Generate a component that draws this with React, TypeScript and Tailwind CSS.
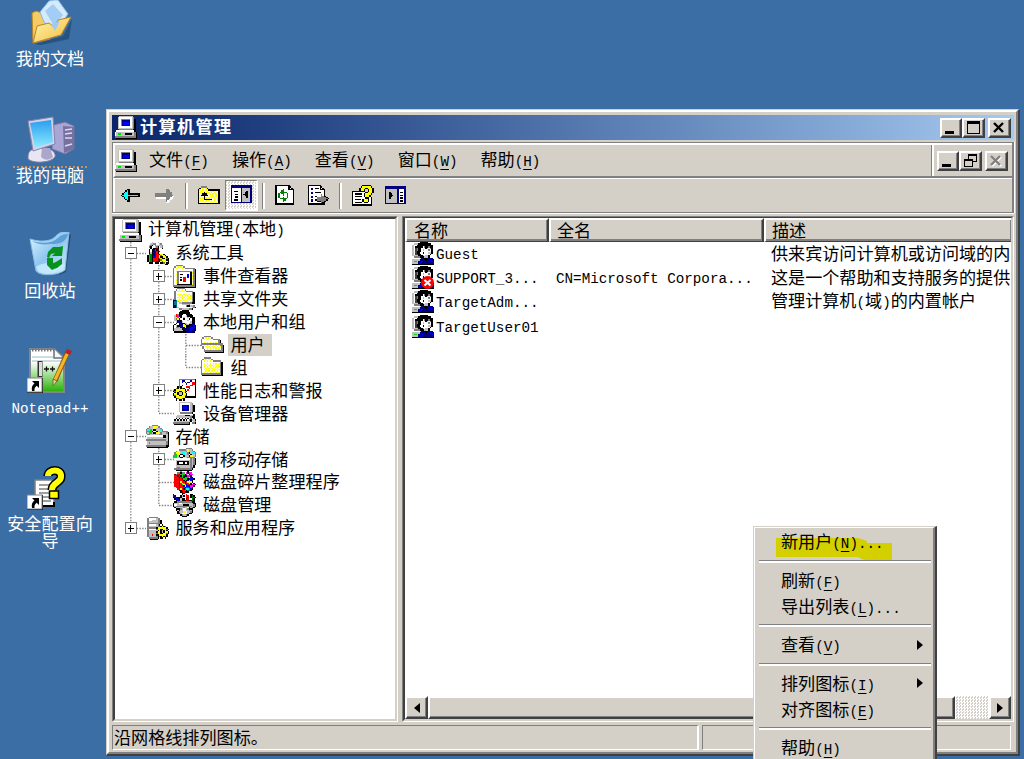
import type { ReactNode } from "react";

/* ---------- text ---------- */

/** Half-width runs take half of a full-width cell; "&X" underlines X. */
function T({ children, className = "whitespace-pre leading-[22px]" }: { children: string; className?: string }) {
  const parts = children.split(/([\x20-\x7e]+)/).filter(Boolean);
  return (
    <span className={"pb-[2px] text-[17.1px] " + className}>
      {parts.map((p, i) => {
        if (!/^[\x20-\x7e]/.test(p)) return <span key={i}>{p}</span>;
        const m = p.match(/^(.*)&(.)(.*)$/);
        return (
          <span key={i} className="font-['Liberation_Mono',monospace] text-[14.25px]">
            {m ? (
              <>
                {m[1]}
                <span className="underline decoration-1 underline-offset-[3px]">{m[2]}</span>
                {m[3]}
              </>
            ) : (
              p
            )}
          </span>
        );
      })}
    </span>
  );
}

/* ---------- pixel icons ---------- */

const PALETTE: Record<string, string> = {
  K: "#000000", W: "#ffffff", G: "#808080", L: "#c0c0c0", Y: "#ffff00", B: "#0000ff",
  N: "#000080", R: "#ff0000", E: "#00e000", C: "#00ffff", T: "#008080", O: "#808000",
  M: "#ff00ff", D: "#404040", F: "#008000", P: "#ffffe0", X: "#800000",
};

const ICONS = {
  computer: [
    "...LLLLLLLLLL...", "..LWWWWWWWWWLG..", "..LWGGGGGGGWLGK.", "..LWGNNNNNNWLGK.",
    "..LWGNBBBBNWLGK.", "..LWGNBBBBNWLGK.", "..LWGNNNNNNWLGK.", "..LWWWWWWWWWLGK.",
    "..LLLLLLLLLLLGK.", "...GGGGGGGGGGKK.", ".WWWWWWWWWWWWWK.", "WLLLLLLLLLLLLLGK",
    "WLEELLLKKKKKLLGK", "WLLLLLLLLLLLLLGK", "GGGGGGGGGGGGGGGK", ".KKKKKKKKKKKKKKK",
  ],
  tools: [
    "....LWWWL.......", "..WLLGGWWLG.....", ".WLGK.GLLLLG....", "..GK..LGK.LG....",
    "...KWKKXK..K....", "..KWKNRKX.......", "..KWKNBRKX......", "..KLKNBRK.......",
    "..FFKNBRRKYYK...", ".KEFKNBRRYOYYK..", ".KEFKBBRRYKKYYK.", ".KEFKRRRXOYKKYOK",
    ".KEFKRRRXKOYYYKK", ".KEFKRRXKKYOYYYK", "..KKK.KKK.KKOYKK", ".............KK.",
  ],
  events: [
    "..GGGGG.........", ".GPYPYPG........", "GPYPYPYPGGGGGGG.", "GWWWWWWWWWWWWWGK",
    "GWYGGGGGGGGGGPGK", "GWPGWWWWWWWWKYGK", "GWYGWKKWWWBWKPGK", "GWPGWWWWWWBWKYGK",
    "GWYGWKWRRWBWKPGK", "GWPGWWWRRWWWKYGK", "GWYGWKWRRWWWKPGK", "GWPGWWWRRWWWKYGK",
    "GWYGWWWWWWWWKPGK", "GWPKKKKKKKKKKYGK", "GGGGGGGGGGGGGGGK", ".KKKKKKKKKKKKKKK",
  ],
  share: [
    "...GGGGG........", "..GPYPYPG.......", ".GPYPYPYPGGGGG..", ".GWWWWWWWWWWWGK.",
    ".GWYPYPYPYPYPGK.", ".GWPYPYPYPYPYGK.", ".GWYPYPYPYPYPGK.", ".GWPYPYPYPYPYGK.",
    "NNTYPYPYPYPYPGK.", "NTTLYPYPYPYPYGK.", "NTTWLLGGGGGGGKK.", "NTTWWWLLLLLG....",
    "BNTWWWWWWGKKLLG.", "NNTLWWWWWWWWWLGK", "....GGLLLLLGGK..", "......KKKKK.....",
  ],
  users: [
    ".....KKKKKK.....", "..WWKKKKKKKK....", ".WRGKKKWWKKKK...", ".LRMKKWWWLKKKK..",
    "WLYOWKWLWWLWKKK.", "WLOYNWWKWWWKWKK.", ".LLNNKWWWWLWWKK.", "..LNNNLWWWWWLKK.",
    "..KWNNNKLLWLLKK.", ".KWWKNNYKLLKKNN.", "KWLKKNNYYKKNNNBK", "KWEELKNNYNNNBBBK",
    "KLLLLLKNNNNBBBNK", "KLLLLLLKNNNNBNNK", ".KKKKKKKKNNNNNK.", "................",
  ],
  user: [
    "......KKKKKK....", "..LLLKKKKKKKKK..", ".LWWKKKKKKKKKKK.", ".LWKKKKKWGKKGKK.",
    ".LWDGKKWWWKLWGK.", ".LWDGKKWLWWWGWK.", ".LWDKKKWWWWWWWK.", ".LWDKKWWKWWWLLK.",
    ".LWDDKKWWWWWWK..", ".LLLLKKKLWLLK...", "..GGGGKKKLLLK...", "WWWWWWLNKKKNNNN.",
    "WLLLLLNNNNKNNBNN", "WLEELNNBNNNNNNBN", "WLLLLNBNNNNNNNNN", ".KKKKKKKKKKKKKKK",
  ],
  folderOpen: [
    "................", "................", "..GGGGG.........", ".GPYPYPG........",
    "GPYPYPYPGGGGG...", "GWWWWWWWWWWWGK..", "GWYPYPYPYPYPGK..", "GGGGGGGGGGGGGGG.",
    "GWYPYPYPYPYPYGGK", ".GWYPYPYPYPYPYGK", ".GWPYPYPYPYPYPGK", "..GWYPYPYPYPYPGK",
    "..GGGGGGGGGGGGGK", "...KKKKKKKKKKKKK", "................", "................",
  ],
  folder: [
    "................", "..GGGGG.........", ".GPYPYPG........", "GPYPYPYPGGGGGG..",
    "GWWWWWWWWWWWWGK.", "GWYPYPYPYPYPYGK.", "GWPYPYPYPYPYPGK.", "GWYPYPYPYPYPYGK.",
    "GWPYPYPYPYPYPGK.", "GWYPYPYPYPYPYGK.", "GWPYPYPYPYPYPGK.", "GWYPYPYPYPYPYGK.",
    "GGGGGGGGGGGGGGK.", ".KKKKKKKKKKKKKK.", "................", "................",
  ],
  perf: [
    "....GGGGGGGGGGGK", "....GWNNWWWWNWWK", "....GWBWNWNNWRRK", "....GWWWWNWWWRRK",
    "....GWNWWWWWRRWK", "...KGKWWWRRRWWWK", "..OKYKOKWWWRWWWK", ".KYYYYYYKWRWWWWK",
    "KOYYKKYYOKWWWWWK", ".KYKLLKYKWWWWWWK", "KYYKLLKYYKWWWWWK", "KOYYKKYYOKWWWWWK",
    ".KYYYYYYKKKKKKKK", "..KOYYOK........", "..K.KK.K........", "................",
  ],
  device: [
    "....LLLLLLLLL...", "....LWWWWWWWLG..", "....LWNNNNNWLGK.", "....LWNBBBNWLGK.",
    "....LWNBBBNWLGK.", "....LWNNNNNWLGK.", "....LWWWWWWWLGK.", ".....GGGGGGGGK..",
    "...WWWWWWWWWWWK.", "...LLLLLKKKKLLK.", "..LLLLLLLLLLGKK.", ".WKWKWKWKWKWG.K.",
    "WKWKWKWKWKWGKLLK", "WLLLLLLLLLLLKWLG", "GGGGGGGGGGGK.GGK", ".KKKKKKKKKKK....",
  ],
  storage: [
    "....GGGG........", "..GLLYYYGG......", ".GCLLYYLLCG.....", "GCCELKKLLLCG....",
    "GEEEKWWKYLLGGGG.", "GLEELKKYYYGLLLGK", ".GGLLLLLLGGLLLLK", "WWWWWWWWWWWWKKLK",
    "WLLLLLLLLLLLKKLK", "WLLLLLLLLLLLLLLK", "GGGGGGGGGGGGGGLK", "WLLLLLLLLLLLLLGK",
    "WLELLLLLLLLLLLGK", "WLLLLLLLLLLLLLGK", "GGGGGGGGGGGGGGKK", ".KKKKKKKKKKKKKK.",
  ],
  removable: [
    ".........GGGG...", "....GGGGGLYLLG..", "..GYYLCLLGYLLCG.", ".GYYYLCCLLGKLCCG",
    ".GEYYKKCLLGWKLLG", "GEELKWWKLLLKYYLG", "GEELLKKYYLGGGGG.", ".WWWWWWWWWWWGLGK",
    ".WLLLLLLLLLLGLGK", ".WLKKKKKKKKLGLGK", ".WLKWWWKWWKLGLGK", ".WLKKKKKKKKLGLGK",
    ".WLLLLLLLLLLGLK.", ".WLEELLLLLLLGGK.", ".GGGGGGGGGGGGK..", "..KKKKKKKKKKK...",
  ],
  defrag: [
    ".....G....K.....", "...GGKGG.MKMM...", ".XGRXGEEKM.KMM..", ".RRXRKENKKMMK...",
    ".RRRXRGKEEM.BK..", ".RRRXRXEEEKBBBK.", ".RRRXRRKEKBYBK..", ".RRRXYRRKRYYYK..",
    ".RRRXRYEKRRYK.K.", ".RRRXREYEBRRKMMK", ".RRRXRRBYBBKMMK.", "..RRXRRRKTTBMK..",
    "...RRYRKTCCTBK..", "....XKRREKTTK...", ".....KXRKKK.....", "......KK........",
  ],
  diskmgmt: [
    "N.....K..R..KK..", "BN...KLK.RR.KFK.", "KBNKKKL..RX.KFFK", ".KBNKLKK.XR..FK.",
    "..KBKLKKKRXKKFK.", ".KKGGGGGGGGGGKK.", "KLLLWWLLLLLLLLKK", "KWWLLLLKKKKLLLGK",
    "KLGGGGGGGGGGGLGK", ".KLLLLLGLLWKLGK.", "..KKKGLWWLGKKK..", "..KLKLLWWLLGLK..",
    "...KGLLYYWLLGK..", "...KKLWWWWLKK...", ".....KGLLGK.....", "......KKKK......",
  ],
  services: [
    "..GGGGGG........", ".GWWWWWLGG......", ".GWWLLLLGGK.....", ".GLLLLLLGGK.....",
    ".GGGGGGGGGK.....", ".GWWWWWLGK.K....", ".GLLLLLLGOKYKO..", ".GGGGGGKYYYYYYK.",
    ".GWWWWWOYYKKYYOK", ".GLLLLLLKYKLKYK.", ".GLLLLLKYYKLKYYK", ".GLLLLLOYYKKYYOK",
    ".GLLRLLKKYYYYYK.", ".GLLLLLGKOKYKOK.", "..GGGGGGK.KK.K..", "...KKKKK........",
  ],
  up: [
    "................", "..GGGG..........", ".KPYPYK.........", "KYPYPYPKKKKKKKK.",
    "KPYPYPYPYPYPYPK.", "KYPYKYPYPYPYPYK.", "KPYKKKYPYPYPYPK.", "KYKKKKKPYPYPYPK.",
    "KPYPKPYPYPYPYPK.", "KYPYKYPYPYPYPYK.", "KPYPKKKKKKPYPYK.", "KYPYPYPYPYPYPYK.",
    "KPYPYPYPYPYPYPK.", "KKKKKKKKKKKKKKK.", "................", "................",
  ],
  pane: [
    "................", "NNNNNNNNNNNNNNN.", "NNNNNNNNNNNNNNN.", "NWWWWWWNLLLLLLN.",
    "NWWWWWWNLLLLLLN.", "NWKKKWWNLLLKLLN.", "NWWWWWWNLLKKLLN.", "NWWKKWWNLKKKLLN.",
    "NWWWWWWNLLKKLLN.", "NWWKKWWNLLLKLLN.", "NWWWWWWNLLLLLLN.", "NWKKKWWNLLLLLLN.",
    "NWWWWWWNLLLLLLN.", "NNNNNNNNNNNNNNN.", "................", "................",
  ],
  paneRight: [
    "................", "NNNNNNNNNNNNNNN.", "NNNNNNNNNNNNNNN.", "NLLLLLLLLNWWWWN.",
    "NLLLLLLLLNWWWWN.", "NLLKLLLLLNWKKWN.", "NLLKKLLLLNWWWWN.", "NLLKKKLLLNWKKWN.",
    "NLLKKLLLLNWWWWN.", "NLLKLLLLLNWKKWN.", "NLLLLLLLLNWWWWN.", "NLLLLLLLLNWKKWN.",
    "NLLLLLLLLNWWWWN.", "NNNNNNNNNNNNNNN.", "................", "................",
  ],
  refresh: [
    ".KKKKKKKKKK.....", ".KWWWWWWWWKK....", ".KWWWWWWWWKWK...", ".KWWWWFWWWKKKK..",
    ".KWWWFFWWWWWWK..", ".KWWFFFFFWWWWK..", ".KWFWFFWWFWWWK..", ".KWFWWFWWFWWWK..",
    ".KWFWWWWWFWWWK..", ".KWFWWFWWFWWWK..", ".KWWFFFFFWWWWK..", ".KWWWWFFWWWWWK..",
    ".KWWWWFWWWWWWK..", ".KWWWWWWWWWWWK..", ".KKKKKKKKKKKKK..", "................",
  ],
  exportList: [
    "KKKKKKKKKK......", "KWWWWWWWWKK.....", "KWNNWKKKWKWK....", "KWNNWWWWWKKKK...",
    "KWWWWWWWWWWWK...", "KWNNWKKKKKWWK...", "KWNNWWWWWWWWK...", "KWWWWWWWWWGWK...",
    "KWNNWKKWWWGGKK..", "KWNNWWWGGGGGGGK.", "KWWWWWWGGGGGGGGK", "KWNNWKKGGGGGGGK.",
    "KWNNWWWKKKGGKK..", "KWWWWWWWWWGKK...", "KKKKKKKKKKKKK...", "................",
  ],
  help: [
    ".......KKKKKK...", "......KYYYYYYK..", ".....KYYYKKYYYK.", ".....KYYK..KYYK.",
    "KKKKKKKKK..KYYK.", "KWWWWWWWWKKYYYK.", "KWKKKKKWKYYYYK..", "KWWWWWWWKYYYK...",
    "KWKKKKKWKYYYK...", "KWWWWWWWWKKKWK..", "KWKKKKWKYYYKWK..", "KWWWWWWKYYYKWK..",
    "KWKKKKKWKKKWWK..", "KWWWWWWWWWWWWK..", "KKKKKKKKKKKKKK..", "................",
  ],
  back: [
    "................", "................", "....KK..........", "...KCK..........",
    "..KCCK..........", ".KCCCKKKKKKKK...", "KCCCCCCCCCCCK...", ".KCCCKKKKKKKK...",
    "..KCCK..........", "...KCK..........", "....KK..........", "................",
  ],
  forward: [
    "................", "................", "........GG......", "........GGG.....",
    "........GGGG....", "GGGGGGGGGGGG....", "GGGGGGGGGGGGG...", "GGGGGGGGGGGGWW..",
    ".WWWWWWWGGGWW...", "........GGWW....", "........GWW.....", "........WW......",
  ],
} as const;

type IconName = keyof typeof ICONS;

function Pix({ name, className = "size-[23px]" }: { name: IconName; className?: string }) {
  const rows = ICONS[name];
  const rects: ReactNode[] = [];
  rows.forEach((row, y) => {
    let x = 0;
    while (x < row.length) {
      const c = row[x];
      let e = x + 1;
      while (e < row.length && row[e] === c) e++;
      if (c !== ".") rects.push(<rect key={`${x}-${y}`} x={x} y={y} width={e - x} height={1} fill={PALETTE[c]} />);
      x = e;
    }
  });
  return (
    <svg viewBox={`0 0 16 ${rows.length}`} preserveAspectRatio="none" shapeRendering="crispEdges" className={"block shrink-0 " + className}>
      {rects}
    </svg>
  );
}

/* ---------- desktop ---------- */

function Shortcut() {
  return (
    <g>
      <rect x="0" y="30" width="16" height="15" fill="#000" />
      <rect x="0" y="30" width="15" height="14" fill="#fff" stroke="#808080" strokeWidth="1" />
      <path d="M5 33h7v7l-2.300-2.300c-2 1.500-2.400 3-2.200 5.300H5c-.8-3.500.3-6 2.500-7.500z" fill="#000" />
    </g>
  );
}

function DesktopIcon({ children, label, className, focus }: { children: ReactNode; label: string; className: string; focus?: boolean }) {
  return (
    <div className={"absolute left-[2px] flex w-[96px] flex-col items-center text-white " + className}>
      <div className="h-[46px] w-[46px]">{children}</div>
      <div className={"mt-[3px] w-[74px] border-t-2 " + (focus ? "border-dotted border-[#c89058]" : "border-transparent")} />
      <T className="-mt-[2px] w-[90px] text-center leading-[17px]">{label}</T>
    </div>
  );
}

function Desktop() {
  return (
    <>
      <DesktopIcon className="top-0" label="我的文档">
        <svg viewBox="0 0 46 46" className="block size-full">
          <defs>
            <linearGradient id="fold" x1="0" y1="0" x2="1" y2="1">
              <stop offset="0" stopColor="#fff6b0" />
              <stop offset="1" stopColor="#f2bb3c" />
            </linearGradient>
          </defs>
          <path d="M8 44l28-8 9-17-3 20-28 6z" fill="#1d3f66" opacity=".6" />
          <path d="M5 13l4-2 6 2 2 3 6-1v24L6 43z" fill="#f4cc62" stroke="#b88424" />
          <path d="M13 12L22 1l5-1h4l10 14-12 17-12-9z" fill="#d5ebfc" stroke="#83b9ea" />
          <path d="M18 11l8-7 10 11-9 11z" fill="#a4cdf5" />
          <path d="M6 43l4-17 12-3 5 4 4-7 13-3-10 18z" fill="url(#fold)" stroke="#b88424" />
          <path d="M24 24l9-3-5 10z" fill="#9ccbf4" />
        </svg>
      </DesktopIcon>
      <DesktopIcon className="top-[117px]" label="我的电脑" focus>
        <svg viewBox="0 0 46 46" className="block size-full overflow-visible">
          <defs>
            <linearGradient id="scr" x1="0" y1="0" x2="0" y2="1">
              <stop offset="0" stopColor="#2c9cf0" />
              <stop offset="1" stopColor="#8cecff" />
            </linearGradient>
          </defs>
          <path d="M26 8l12-3 9 4v23l-9 5-13-5z" fill="#a9a5d4" stroke="#77739f" />
          <path d="M36 9l11 1v22l-10 4z" fill="#77719f" />
          <path d="M38 13l7-1M38 17l7-1M38 21l7 0M38 29l7-2" stroke="#dcd8f4" strokeWidth="1.500" />
          <path d="M1 39c0-6 6-8 12-8h7c6 2 9 5 8 9-4 6-22 7-27 2z" fill="#e8e6f4" stroke="#7a769c" />
          <path d="M15 31h8l3 9c-4 4-9 3-12 0z" fill="#aaa7cb" />
          <path d="M1 4l25-4 2 27-22 7z" fill="#d4d2e8" stroke="#8582ab" />
          <path d="M3 6l21-3 2 22-18 6z" fill="url(#scr)" />
        </svg>
      </DesktopIcon>
      <DesktopIcon className="top-[232px]" label="回收站">
        <svg viewBox="0 0 46 46" className="block size-full">
          <defs>
            <linearGradient id="bin" x1="0" y1="0" x2="1" y2="1">
              <stop offset="0" stopColor="#e4f6ff" />
              <stop offset=".5" stopColor="#8cc6f0" />
              <stop offset="1" stopColor="#d6f0ff" />
            </linearGradient>
          </defs>
          <path d="M40 4l4-2-5 38-7 3z" fill="#1f4064" opacity=".7" />
          <path d="M3 7c9 3 20 3 25-2 4-5 9-6 14-5l-4 38c-6 5-24 7-29 1z" fill="url(#bin)" stroke="#8abce2" />
          <path d="M5 9c11 3 21 2 26-3 3-3 6-4 10-4-2 9-9 10-18 10-7 1-13 0-18-3z" fill="#5d9fd7" />
          <path d="M9 35c5-5 21-5 29-2-5 9-22 11-27 6z" fill="#cbeeff" opacity=".8" />
          <g fill="#079220">
            <path d="M21 20l5-5 6 0 4-1-1 10-10 0 3-3-4 1-2 4-2-1z" />
            <path d="M20 26l6 0 0 5 3-1 6-4 0 6-5 4-3 1-2 1-5-5z" />
          </g>
        </svg>
      </DesktopIcon>
      <DesktopIcon className="top-[348px]" label="Notepad++">
        <svg viewBox="0 0 46 46" className="block size-full">
          <defs>
            <linearGradient id="npp" x1="0" y1="0" x2="0" y2="1">
              <stop offset=".3" stopColor="#ffffff" />
              <stop offset="1" stopColor="#25b000" />
            </linearGradient>
          </defs>
          <path d="M3 1h24l10 9v34H3z" fill="url(#npp)" stroke="#7f8790" strokeWidth="2" />
          <path d="M5 2h22" stroke="#777" strokeWidth="3" strokeDasharray="1.500 1.500" />
          <path d="M5 9h21M5 13h30" stroke="#bed2da" strokeWidth="1.500" />
          <path d="M27 1v9h9" fill="#f7f7f7" stroke="#68717a" strokeWidth="1.500" />
          <path d="M13 13v16" stroke="#333" strokeWidth="5" />
          <path d="M13.500 14v14" stroke="#ddd" strokeWidth="3" />
          <path d="M17 21h5M19.500 18.500v5M23 21h5M25.500 18.500v5" stroke="#111" strokeWidth="1.300" />
          <path d="M41 3L28 33" stroke="#8c5b14" strokeWidth="5" />
          <path d="M41 4L28 32" stroke="#f5b627" strokeWidth="3" />
          <path d="M26 31l4 2-4 5z" fill="#e9cd9a" stroke="#6a501f" strokeWidth=".7" />
          <path d="M40 1l5 2-2 4-5-2z" fill="#b82030" />
          <Shortcut />
        </svg>
      </DesktopIcon>
      <DesktopIcon className="top-[465px]" label="安全配置向导">
        <svg viewBox="0 0 46 46" className="block size-full">
          <path d="M8 15h19v26H8z" fill="#fff" stroke="#808080" strokeWidth="1.500" />
          <path d="M12 20h10M12 24h12M12 28h12M12 32h12M16 36h8" stroke="#808080" strokeWidth="1.500" />
          <path d="M27 37v4H9" stroke="#000" strokeWidth="2" fill="none" />
          <path d="M21 11c0-7 14-8 13 1 0 6-9 5-9 13" fill="none" stroke="#000" strokeWidth="9" />
          <path d="M21 11c0-7 14-8 13 1 0 6-9 5-9 13" fill="none" stroke="#ff0" strokeWidth="6" />
          <rect x="22.500" y="26" width="9" height="7.500" fill="#ff0" stroke="#000" strokeWidth="1.500" />
          <Shortcut />
        </svg>
      </DesktopIcon>
    </>
  );
}

/* ---------- window chrome ---------- */

const RAISED =
  "bg-[#d4d0c8] border-t-2 border-l-2 border-t-white border-l-white border-r-2 border-b-2 border-r-[#404040] border-b-[#404040] shadow-[inset_-1px_-1px_0_#808080]";

function CapButton({ kind, disabled, className = "" }: { kind: "min" | "max" | "restore" | "close"; disabled?: boolean; className?: string }) {
  return (
    <div className={"h-[20px] shrink-0 " + RAISED + " " + className}>
      <svg viewBox="0 0 18 16" shapeRendering="crispEdges" className="block h-[16px] w-[18px]">
        {kind === "min" && <rect x="3" y="11" width="9" height="3" fill="#000" />}
        {kind === "max" && <path d="M3 1h13v13H3zM4 4v9h11V4z" fill="#000" fillRule="evenodd" />}
        {kind === "restore" && (
          <>
            <path d="M7 1h9v8H7zM8 3v5h7V3z" fill="#000" fillRule="evenodd" />
            <path d="M3 6h9v8H3zM4 8v5h7V8z" fill="#000" fillRule="evenodd" />
            <rect x="4" y="8" width="7" height="5" fill="#d4d0c8" />
          </>
        )}
        {kind === "close" && (
          <g shapeRendering="auto" fill="none" strokeWidth="2.400">
            {disabled && <path d="M5 4l9 9M14 4l-9 9" stroke="#fff" />}
            <path d="M4 3l9 9M13 3l-9 9" stroke={disabled ? "#808080" : "#000"} />
          </g>
        )}
      </svg>
    </div>
  );
}

function ToolSep({ className }: { className: string }) {
  return <div className={"h-[26px] w-[3px] shrink-0 border-l border-l-[#808080] bg-white " + className} />;
}

const CHECKER = "bg-[conic-gradient(#fff_25%,#d4d0c8_0_50%,#fff_0_75%,#d4d0c8_0)] bg-[length:3px_3px]";

/* ---------- tree ---------- */

type Guide = "line" | "tee" | "end" | "plus" | "minus" | "plusEnd";
type Node = { guides: Guide[]; icon: IconName; label: string; selected?: boolean };

const TREE: Node[] = [
  { guides: [], icon: "computer", label: "计算机管理(本地)" },
  { guides: ["minus"], icon: "tools", label: "系统工具" },
  { guides: ["line", "plus"], icon: "events", label: "事件查看器" },
  { guides: ["line", "plus"], icon: "share", label: "共享文件夹" },
  { guides: ["line", "minus"], icon: "users", label: "本地用户和组" },
  { guides: ["line", "line", "tee"], icon: "folderOpen", label: "用户", selected: true },
  { guides: ["line", "line", "end"], icon: "folder", label: "组" },
  { guides: ["line", "plus"], icon: "perf", label: "性能日志和警报" },
  { guides: ["line", "end"], icon: "device", label: "设备管理器" },
  { guides: ["minus"], icon: "storage", label: "存储" },
  { guides: ["line", "plus"], icon: "removable", label: "可移动存储" },
  { guides: ["line", "tee"], icon: "defrag", label: "磁盘碎片整理程序" },
  { guides: ["line", "end"], icon: "diskmgmt", label: "磁盘管理" },
  { guides: ["plusEnd"], icon: "services", label: "服务和应用程序" },
];

function GuideCell({ kind }: { kind: Guide }) {
  const boxed = kind === "plus" || kind === "minus" || kind === "plusEnd";
  const last = kind === "end" || kind === "plusEnd";
  return (
    <svg viewBox="0 0 27.5 22.92" className="block h-[22.92px] w-[27.5px] shrink-0 overflow-visible">
      <path d={last ? "M13.800 0V11.500" : "M13.800 0V22.920"} stroke="#808080" strokeWidth="1.300" strokeDasharray="1.400 1.465" />
      {kind !== "line" && <path d="M14 11.500H29" stroke="#808080" strokeWidth="1.300" strokeDasharray="1.400 1.400" />}
      {boxed && (
        <g shapeRendering="crispEdges">
          <rect x="8" y="5.500" width="12" height="12" fill="#808080" />
          <rect x="9" y="6.500" width="10" height="10" fill="#fff" />
          <rect x="10.500" y="11" width="7" height="1.400" fill="#000" />
          {kind !== "minus" && <rect x="13" y="8" width="1.500" height="7" fill="#000" />}
        </g>
      )}
    </svg>
  );
}

function Tree() {
  return (
    <div className="flex flex-col">
      {TREE.map((n) => (
        <div key={n.label} className="flex h-[22.92px] items-center pl-[2px]">
          {n.guides.map((g, i) => (
            <GuideCell key={i} kind={g} />
          ))}
          <Pix name={n.icon} className={"h-[23px] w-[23px] " + (n.guides.length ? "mr-[4px] ml-[1px]" : "mr-[3px] ml-[2px]")} />
          <div className={"flex h-full items-center pl-[3px] " + (n.selected ? "w-[44px] bg-[#d4d0c8]" : "")}>
            <T>{n.label}</T>
          </div>
        </div>
      ))}
    </div>
  );
}

/* ---------- list ---------- */

const USERS = [
  { name: "Guest", full: "", desc: "供来宾访问计算机或访问域的内" },
  { name: "SUPPORT_3...", full: "CN=Microsoft Corpora...", desc: "这是一个帮助和支持服务的提供", off: true },
  { name: "TargetAdm...", full: "", desc: "管理计算机(域)的内置帐户" },
  { name: "TargetUser01", full: "", desc: "" },
];

function Header({ children, className }: { children: string; className: string }) {
  return (
    <div className={"flex h-[24px] shrink-0 items-center border-t-2 border-b border-l-2 border-white border-b-[#404040] bg-[#d4d0c8] shadow-[inset_-1px_-1px_0_#808080,inset_0_-2px_0_#808080] " + className}>
      <T className="pb-[3px] whitespace-pre leading-[21px]">{children}</T>
    </div>
  );
}

function List() {
  return (
    <div className="flex min-h-0 flex-1 flex-col overflow-hidden">
      <div className="flex">
        <Header className="w-[144px] border-r-2 border-r-[#404040] pl-[7px]">名称</Header>
        <Header className="w-[215px] border-r-2 border-r-[#404040] pl-[6px]">全名</Header>
        <Header className="w-[247px] pl-[6px]">描述</Header>
      </div>
      {USERS.map((u) => (
        <div key={u.name} className="flex h-[24.3px] shrink-0 items-center">
          <div className="flex w-[151px] shrink-0 items-center pl-[6px]">
            <div className="relative mb-[2px]">
              <Pix name="user" />
              {u.off && (
                <svg viewBox="0 0 13 13" className="absolute right-0 bottom-0 size-[13px]">
                  <circle cx="6.500" cy="6.500" r="6.500" fill="#f00" />
                  <path d="M3.500 4l6 5.500M9.500 4l-6 5.500" stroke="#fff" strokeWidth="2" />
                </svg>
              )}
            </div>
            <T className="ml-[2px] whitespace-pre leading-[22px]">{u.name}</T>
          </div>
          <T className="w-[215px] shrink-0 whitespace-pre leading-[22px]">{u.full}</T>
          <T>{u.desc}</T>
        </div>
      ))}
    </div>
  );
}

function ScrollArrow({ left, className }: { left?: boolean; className: string }) {
  return (
    <div className={"flex h-[23px] shrink-0 items-center justify-center " + RAISED + " " + className}>
      <svg viewBox="0 0 6 10" className="block h-[10px] w-[6px]">
        <path d={left ? "M6 0v10L0 5z" : "M0 0v10l6-5z"} fill="#000" />
      </svg>
    </div>
  );
}

/* ---------- context menu ---------- */

function MenuItem({ label, sub, className = "h-[26px]" }: { label: string; sub?: boolean; className?: string }) {
  return (
    <div className={"relative flex shrink-0 items-center pr-[10px] pl-[26px] " + className}>
      <T>{label}</T>
      {sub && (
        <svg viewBox="0 0 6 10" className="mb-[4px] ml-auto block h-[10px] w-[6px]">
          <path d="M0 0v10l6-5z" fill="#000" />
        </svg>
      )}
    </div>
  );
}

function MenuSep() {
  return <div className="mr-[2px] ml-[4px] h-[3px] shrink-0 border-t border-[#808080] bg-white" />;
}

function ContextMenu() {
  return (
    <div className="absolute top-[526px] left-[753px] h-[240px] w-[184px] border border-r-2 border-[#d4d0c8] border-r-[#404040] bg-[#d4d0c8]">
      <div className="relative flex h-full flex-col border-t border-r-2 border-l border-white border-r-[#808080]">
        <svg viewBox="0 0 116 22" className="absolute top-[10px] left-[21px] h-[22px] w-[116px]">
          <path d="M0 0H82l9 3v2h25v17H88l-6-3H0z" fill="#d4d000" />
        </svg>
        <MenuItem label="新用户(&N)..." className="mt-[2px] h-[27px]" />
        <div className="h-[3px]" />
        <MenuSep />
        <MenuItem label="刷新(&F)" className="mt-[6px] h-[26px]" />
        <MenuItem label="导出列表(&L)..." className="h-[26px]" />
        <div className="h-[3px]" />
        <MenuSep />
        <MenuItem label="查看(&V)" sub className="mt-[6px] h-[27px]" />
        <div className="h-[3px]" />
        <MenuSep />
        <MenuItem label="排列图标(&I)" sub className="mt-[6px] h-[26px]" />
        <MenuItem label="对齐图标(&E)" className="h-[26px]" />
        <div className="h-[3px]" />
        <MenuSep />
        <MenuItem label="帮助(&H)" className="mt-[6px] h-[26px]" />
      </div>
    </div>
  );
}

/* ---------- app ---------- */

export default function App() {
  return (
    <div className="relative h-[759px] w-[1024px] overflow-hidden bg-[#3a6ea5] font-['Noto_Sans_CJK_SC',sans-serif] text-black">
      <Desktop />

      <div className="absolute top-[109px] left-[106px] h-[647px] w-[914px] border-t border-r-2 border-b-2 border-l border-[#d4d0c8] border-r-[#404040] border-b-[#404040] bg-[#d4d0c8]">
        <div className="flex h-full flex-col border-t-2 border-r-2 border-b-2 border-l-2 border-white border-r-[#808080] border-b-[#808080] pt-[3px] pr-[2px] pl-[3px]">
          <div className="flex h-[25px] shrink-0 items-center bg-linear-to-r from-[#0a246a] to-[#a6caf0] pr-[3px] pl-[3px]">
            <Pix name="computer" className="h-[23px] w-[22px]" />
            <T className="mb-[2px] ml-[3px] font-bold tracking-[1.4px] whitespace-pre leading-[22px] text-white">计算机管理</T>
            <CapButton kind="min" className="ml-auto w-[22px]" />
            <CapButton kind="max" className="w-[23px]" />
            <CapButton kind="close" className="ml-[3px] w-[23px]" />
          </div>

          <div className="mt-[2px] flex h-[71px] shrink-0 flex-col border-t border-r-2 border-b border-l border-[#808080] shadow-[0_1px_0_#fff,1px_0_0_#fff]">
            <div className="flex h-[35px] shrink-0 border-t-2 border-b-2 border-l-2 border-white border-b-[#808080]">
              <div className="flex flex-1 items-center">
                <Pix name="computer" className="h-[23px] w-[22px]" />
                <div className="ml-[12px] flex gap-[23px] pt-[2px]">
                  <T>文件(&F)</T>
                  <T>操作(&A)</T>
                  <T>查看(&V)</T>
                  <T>窗口(&W)</T>
                  <T>帮助(&H)</T>
                </div>
              </div>
              <div className="flex w-[81px] items-center border-l border-[#808080] shadow-[inset_2px_0_0_#fff]">
                <CapButton kind="min" className="ml-[5px] w-[22px]" />
                <CapButton kind="restore" className="w-[23px]" />
                <CapButton kind="close" disabled className="ml-[3px] w-[23px]" />
              </div>
            </div>
            <div className="flex flex-1 items-center border-t border-l-2 border-white">
              <Pix name="back" className="mb-[2px] ml-[6px] h-[17px] w-[23px]" />
              <Pix name="forward" className="mb-[2px] ml-[11px] h-[17px] w-[22px]" />
              <ToolSep className="ml-[8px]" />
              <Pix name="up" className="ml-[10px] h-[22px] w-[23px]" />
              <div className={"ml-[4px] flex h-[31px] w-[33px] shrink-0 items-center justify-center border-t border-r-2 border-b-2 border-l border-white border-t-[#808080] border-l-[#808080] pl-[2px] " + CHECKER}>
                <Pix name="pane" className="h-[22px] w-[22px]" />
              </div>
              <ToolSep className="ml-[4px]" />
              <Pix name="refresh" className="ml-[9px] h-[21px] w-[23px]" />
              <Pix name="exportList" className="ml-[11px] h-[21px] w-[21px]" />
              <ToolSep className="ml-[10px]" />
              <Pix name="help" className="ml-[10px] h-[22px] w-[23px]" />
              <Pix name="paneRight" className="ml-[10px] h-[22px] w-[22px]" />
            </div>
          </div>

          <div className="mt-[3px] flex h-[506px] shrink-0">
            <div className="w-[286px] shrink-0 border border-[#808080] border-r-white border-b-white">
              <div className="h-full border-2 border-[#404040] border-r-[#d4d0c8] border-b-[#d4d0c8] bg-white">
                <Tree />
              </div>
            </div>
            <div className="ml-[4px] min-w-0 flex-1 border border-[#808080] border-r-white border-b-white">
              <div className="flex h-full flex-col border-2 border-t border-[#404040] border-r-[#d4d0c8] border-b-[#d4d0c8] bg-white">
                <List />
                <div className={"flex shrink-0 " + CHECKER}>
                  <ScrollArrow left className="w-[23px]" />
                  <div className={"h-[23px] w-[527px] " + RAISED} />
                  <ScrollArrow className="ml-auto w-[22px]" />
                </div>
              </div>
            </div>
          </div>

          <div className="mt-[3px] flex h-[25px] shrink-0 gap-[3px] pr-[3px]">
            <div className="flex w-[587px] items-center border border-r-2 border-[#808080] border-r-white border-b-white pl-[1px]">
              <T>沿网格线排列图标。</T>
            </div>
            <div className="flex-1 border border-[#808080] border-r-white border-b-white" />
          </div>
        </div>
      </div>

      <ContextMenu />
    </div>
  );
}
